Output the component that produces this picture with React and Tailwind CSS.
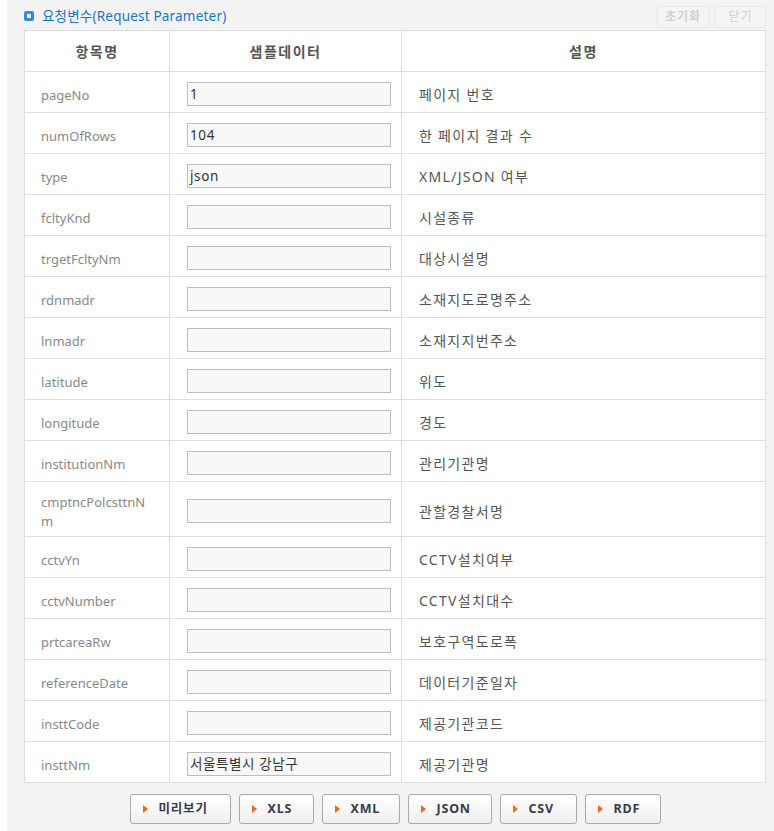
import React from "react";

const rows = [
  ["pageNo", "1", "페이지 번호"],
  ["numOfRows", "104", "한 페이지 결과 수"],
  ["type", "json", "XML/JSON 여부"],
  ["fcltyKnd", "", "시설종류"],
  ["trgetFcltyNm", "", "대상시설명"],
  ["rdnmadr", "", "소재지도로명주소"],
  ["lnmadr", "", "소재지지번주소"],
  ["latitude", "", "위도"],
  ["longitude", "", "경도"],
  ["institutionNm", "", "관리기관명"],
  ["cmptncPolcsttnNm", "", "관할경찰서명"],
  ["cctvYn", "", "CCTV설치여부"],
  ["cctvNumber", "", "CCTV설치대수"],
  ["prtcareaRw", "", "보호구역도로폭"],
  ["referenceDate", "", "데이터기준일자"],
  ["insttCode", "", "제공기관코드"],
  ["insttNm", "서울특별시 강남구", "제공기관명"],
];

const buttons = [
  ["미리보기", "w-[101px]"],
  ["XLS", "w-[75px]"],
  ["XML", "w-[78px]"],
  ["JSON", "w-[84px]"],
  ["CSV", "w-[77px]"],
  ["RDF", "w-[76px]"],
];

export default function App() {
  return (
    <div
      className="w-[774px] h-[831px] bg-white pl-[7px]"
      style={{ fontFamily: '"Noto Sans", "Noto Sans CJK KR", sans-serif' }}
    >
      <div className="h-full bg-[#f3f3f3] pl-[17px] pr-[8px]">
        <div className="flex h-[30px] items-start justify-between">
          <div className="flex items-center gap-[8px] pt-[7px]">
            <span className="flex h-[10px] w-[10px] items-center justify-center rounded-[2px] bg-[#2f8ee0]">
              <span className="block h-[4px] w-[4px] bg-white" />
            </span>
            <span className="text-[13.5px] leading-[18px] tracking-[0.2px] text-[#1b74c9]">
              요청변수(Request Parameter)
            </span>
          </div>
          <div className="flex gap-[6px] pt-[6px]">
            <button className="h-[22px] w-[52px] rounded-[2px] border border-[#e8e8e8] bg-[#f5f5f5] text-[12px] font-bold tracking-[1px] text-[#cfcfcf]">
              초기화
            </button>
            <button className="h-[22px] w-[51px] rounded-[2px] border border-[#e8e8e8] bg-[#f5f5f5] text-[12px] tracking-[1px] text-[#cfcfcf]">
              닫기
            </button>
          </div>
        </div>
        <table className="w-[742px] table-fixed border-collapse bg-white text-[13px]">
          <colgroup>
            <col className="w-[145px]" />
            <col className="w-[232px]" />
            <col />
          </colgroup>
          <thead>
            <tr className="h-[41px]">
              <th className="border border-[#dedede] text-[14px] font-bold tracking-[1.5px] text-[#555]">항목명</th>
              <th className="border border-[#dedede] text-[14px] font-bold tracking-[1.5px] text-[#555]">샘플데이터</th>
              <th className="border border-[#dedede] text-[14px] font-bold tracking-[1.5px] text-[#555]">설명</th>
            </tr>
          </thead>
          <tbody>
            {rows.map(([name, val, desc]) => (
              <tr key={name} className="h-[41px]">
                <td className="break-all border border-[#dedede] pt-[11px] pb-[5px] pl-[16px] pr-[14px] leading-[19px] text-[#888]">
                  {name}
                </td>
                <td className="border border-[#dedede] pt-[4px] pl-[17px] pr-[10px]">
                  <div className="flex h-[24px] w-[204px] items-center border border-[#bdbdbd] bg-[#f8f8f8] pl-[2px] text-[13.5px] tracking-[0.6px] text-[#333]">
                    {val}
                  </div>
                </td>
                <td className="border border-[#dedede] pt-[5px] pl-[17px] text-[14px] tracking-[1.3px] text-[#555]">
                  {desc}
                </td>
              </tr>
            ))}
          </tbody>
        </table>
        <div className="flex w-[742px] justify-center gap-[8px] pt-[11px]">
          {buttons.map(([label, w]) => (
            <button
              key={label}
              className={`${w} flex h-[30px] items-center rounded-[3px] border border-[#aaa] bg-gradient-to-b from-white to-[#efefef] pl-[12px] text-[12.5px] font-bold tracking-[0.8px] text-[#3a3a4a]`}
            >
              <svg width="5" height="8" viewBox="0 0 5 8" className="mr-[11px] shrink-0">
                <polygon points="0,0 5,4 0,8" fill="#e86b24" />
              </svg>
              <span>{label}</span>
            </button>
          ))}
        </div>
      </div>
    </div>
  );
}
